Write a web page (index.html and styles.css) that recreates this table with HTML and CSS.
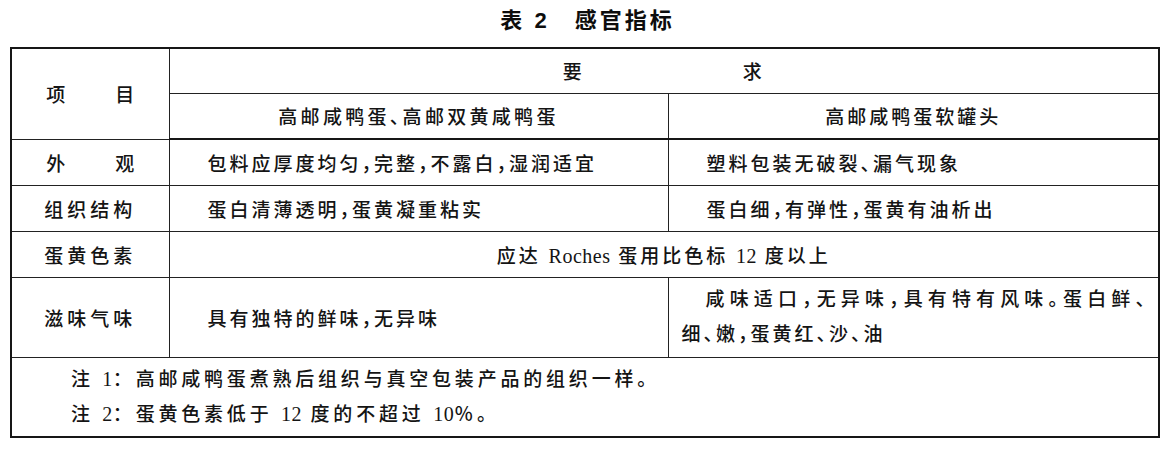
FILE: index.html
```html
<!DOCTYPE html>
<html lang="zh-CN">
<head>
<meta charset="utf-8">
<title>表 2 感官指标</title>
<link rel="stylesheet" href="styles.css">
</head>
<body>
<main class="page">
  <h1 class="title">表 2　感官指标</h1>
  <table class="spec">
    <colgroup>
      <col class="c1">
      <col class="c2">
      <col class="c3">
    </colgroup>
    <thead>
      <tr class="row-h1">
        <th rowspan="2" class="item"><span class="spread"><span>项</span><span>目</span></span></th>
        <th colspan="2" class="req"><span class="req-a">要</span><span class="req-b">求</span></th>
      </tr>
      <tr class="row-h2">
        <th class="sub sub-a">高邮咸鸭蛋、高邮双黄咸鸭蛋</th>
        <th class="sub">高邮咸鸭蛋软罐头</th>
      </tr>
    </thead>
    <tbody>
      <tr class="row">
        <th class="item"><span class="spread"><span>外</span><span>观</span></span></th>
        <td class="txt">包料应厚度均匀，完整，不露白，湿润适宜</td>
        <td class="txt">塑料包装无破裂、漏气现象</td>
      </tr>
      <tr class="row">
        <th class="item">组织结构</th>
        <td class="txt">蛋白清薄透明，蛋黄凝重粘实</td>
        <td class="txt">蛋白细，有弹性，蛋黄有油析出</td>
      </tr>
      <tr class="row">
        <th class="item">蛋黄色素</th>
        <td class="txt center" colspan="2">应达 <span class="lat">Roches</span> 蛋用比色标 <span class="lat">12</span> 度以上</td>
      </tr>
      <tr class="row-tall">
        <th class="item">滋味气味</th>
        <td class="txt">具有独特的鲜味，无异味</td>
        <td class="para"><span class="line1">咸味适口，无异味，具有特有风味。蛋白鲜、</span><span class="line2">细、嫩，蛋黄红、沙、油</span></td>
      </tr>
      <tr class="row-notes">
        <td colspan="3" class="notes">
          <p class="note">注 <span class="lat">1</span>：高邮咸鸭蛋煮熟后组织与真空包装产品的组织一样。</p>
          <p class="note">注 <span class="lat">2</span>：蛋黄色素低于 <span class="lat">12</span> 度的不超过 <span class="lat">10</span>％。</p>
        </td>
      </tr>
    </tbody>
  </table>
</main>
</body>
</html>
```

FILE: styles.css
```css
html, body {
  margin: 0;
  padding: 0;
  background: #ffffff;
}

body {
  color: #141414;
  font-family: "Liberation Serif", "Noto Sans CJK SC", serif;
  font-size: 19px;
  font-feature-settings: "halt";
}

.page {
  width: 1175px;
  padding: 0 0 0 10px;
  box-sizing: border-box;
}

.title {
  margin: 0 0 5px 0;
  height: 42px;
  line-height: 42px;
  width: 1155px;
  text-align: center;
  font-family: "Liberation Sans", "Noto Sans CJK SC", sans-serif;
  font-size: 22px;
  font-weight: 700;
  letter-spacing: 3px;
  color: #0d0d0d;
}

.spec {
  border-collapse: collapse;
  width: 1148px;
  table-layout: fixed;
  border: 2px solid #161616;
}

.c1 { width: 158px; }
.c2 { width: 499px; }
.c3 { width: 491px; }

.spec th,
.spec td {
  border: 1px solid #222222;
  padding: 0;
  font-weight: 500;
  letter-spacing: 3px;
  vertical-align: middle;
  white-space: nowrap;
}

.spec .row-h2 th {
  border-bottom: 2px solid #161616;
}

.row-h1 { height: 45px; }
.row-h2 { height: 46px; }
.row { height: 46px; }
.row-tall { height: 80px; }
.row-notes { height: 80px; }

.spec .item {
  text-align: center;
  letter-spacing: 4px;
}

.spread {
  display: inline-flex;
  justify-content: space-between;
  width: 88px;
  letter-spacing: 0;
}

.spec .req {
  text-align: center;
}

.req-b {
  margin-left: 158px;
}

.spec .sub {
  text-align: center;
}

.spec .sub-a {
  letter-spacing: 3.3px;
}

.spec .txt {
  text-align: left;
  padding-left: 38px;
}

.spec .txt.center {
  text-align: center;
  padding-left: 0;
}

.lat {
  letter-spacing: 0.5px;
  font-size: 20px;
  font-weight: 400;
}

.spec .para {
  padding: 0 10px 0 13px;
  white-space: normal;
  line-height: 35px;
}

.line1 {
  display: block;
  text-indent: 24px;
  text-align: justify;
  text-align-last: justify;
}

.line2 {
  display: block;
}

.spec .notes {
  padding-left: 59px;
  font-feature-settings: normal;
}

.note {
  margin: 0;
  line-height: 35px;
  letter-spacing: 3.8px;
}
```
